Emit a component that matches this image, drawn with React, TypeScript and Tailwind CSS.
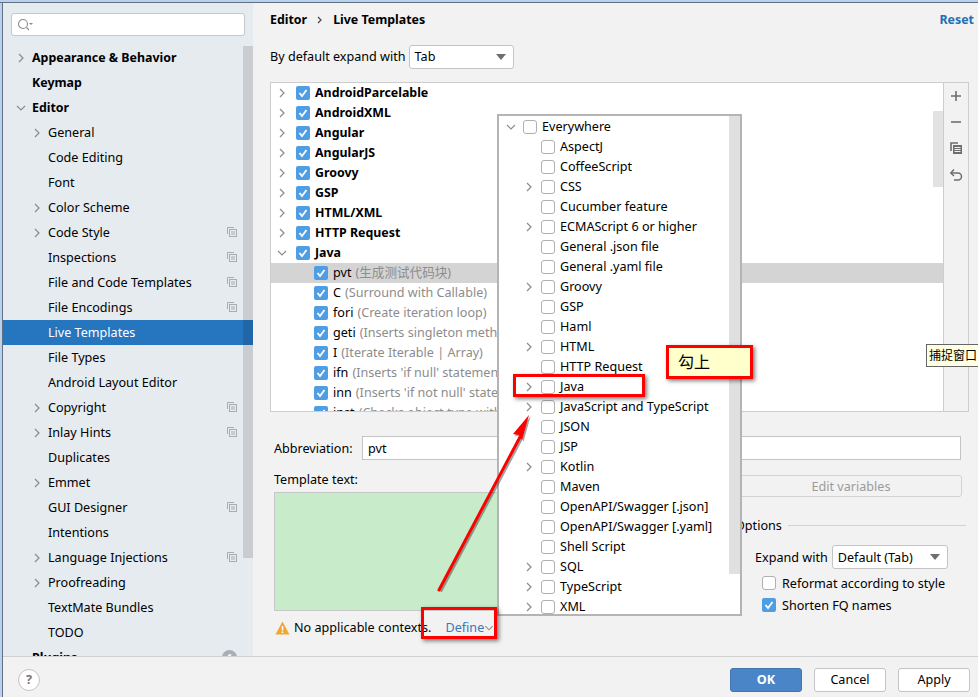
import React from "react";

const font = { fontFamily: '"Noto Sans","Noto Sans CJK SC",sans-serif' };

function Chevron({ open, className = "" }: { open?: boolean; className?: string }) {
  return (
    <svg width="10" height="10" viewBox="0 0 10 10" className={className} fill="none" stroke="#8c8c8c" strokeWidth="1.2">
      {open ? <path d="M1 3l4 4 4-4" /> : <path d="M3 1l4 4-4 4" />}
    </svg>
  );
}

function Check({ checked, className = "" }: { checked?: boolean; className?: string }) {
  return checked ? (
    <span className={`flex h-[14px] w-[14px] shrink-0 items-center justify-center rounded-[2px] bg-[#4f9ee3] ${className}`}>
      <svg width="10" height="10" viewBox="0 0 10 10" fill="none" stroke="#fff" strokeWidth="1.8">
        <path d="M1.5 5l2.5 3 4.5-6" />
      </svg>
    </span>
  ) : (
    <span className={`block h-[14px] w-[14px] shrink-0 rounded-[3px] border border-[#b0b0b0] bg-white ${className}`} />
  );
}

function CopyIcon() {
  return (
    <svg width="10" height="10" viewBox="0 0 10 10" fill="none" stroke="#a9adb2" strokeWidth="1">
      <path d="M.5 7V.5H7" />
      <rect x="2.5" y="2.5" width="7" height="7" />
      <path d="M4 5h4M4 7h4" />
    </svg>
  );
}

type Side = { t: string; lvl: 0 | 1; arrow?: "r" | "d"; copy?: boolean; sel?: boolean; badge?: boolean };
const side: Side[] = [
  { t: "Appearance & Behavior", lvl: 0, arrow: "r" },
  { t: "Keymap", lvl: 0 },
  { t: "Editor", lvl: 0, arrow: "d" },
  { t: "General", lvl: 1, arrow: "r" },
  { t: "Code Editing", lvl: 1 },
  { t: "Font", lvl: 1 },
  { t: "Color Scheme", lvl: 1, arrow: "r" },
  { t: "Code Style", lvl: 1, arrow: "r", copy: true },
  { t: "Inspections", lvl: 1, copy: true },
  { t: "File and Code Templates", lvl: 1, copy: true },
  { t: "File Encodings", lvl: 1, copy: true },
  { t: "Live Templates", lvl: 1, sel: true },
  { t: "File Types", lvl: 1 },
  { t: "Android Layout Editor", lvl: 1 },
  { t: "Copyright", lvl: 1, arrow: "r", copy: true },
  { t: "Inlay Hints", lvl: 1, arrow: "r", copy: true },
  { t: "Duplicates", lvl: 1 },
  { t: "Emmet", lvl: 1, arrow: "r" },
  { t: "GUI Designer", lvl: 1, copy: true },
  { t: "Intentions", lvl: 1 },
  { t: "Language Injections", lvl: 1, arrow: "r", copy: true },
  { t: "Proofreading", lvl: 1, arrow: "r" },
  { t: "TextMate Bundles", lvl: 1 },
  { t: "TODO", lvl: 1 },
  { t: "Plugins", lvl: 0, badge: true },
];

const groups = ["AndroidParcelable", "AndroidXML", "Angular", "AngularJS", "Groovy", "GSP", "HTML/XML", "HTTP Request"];
const tmpl: [string, string][] = [
  ["pvt", "(生成测试代码块)"],
  ["C", "(Surround with Callable)"],
  ["fori", "(Create iteration loop)"],
  ["geti", "(Inserts singleton method getInstance)"],
  ["I", "(Iterate Iterable | Array)"],
  ["ifn", "(Inserts 'if null' statement)"],
  ["inn", "(Inserts 'if not null' statement)"],
  ["inst", "(Checks object type with instanceof)"],
];

const ctx: [string, boolean][] = [
  ["AspectJ", false], ["CoffeeScript", false], ["CSS", true], ["Cucumber feature", false],
  ["ECMAScript 6 or higher", true], ["General .json file", false], ["General .yaml file", false],
  ["Groovy", true], ["GSP", false], ["Haml", false], ["HTML", true], ["HTTP Request", false],
  ["Java", true], ["JavaScript and TypeScript", true], ["JSON", false], ["JSP", false],
  ["Kotlin", true], ["Maven", false], ["OpenAPI/Swagger [.json]", false], ["OpenAPI/Swagger [.yaml]", false],
  ["Shell Script", false], ["SQL", true], ["TypeScript", true], ["XML", true],
];

function Caret() {
  return (
    <svg width="10" height="6" viewBox="0 0 10 6" fill="#6e6e6e">
      <path d="M0 0h10L5 6z" />
    </svg>
  );
}

export default function App() {
  return (
    <div style={font} className="relative flex h-[697px] w-[978px] flex-col overflow-hidden bg-[#f2f2f2] text-[12.6px] leading-[20px] text-black">
      <div className="h-[3px] shrink-0 border-b border-[#5f7183] bg-[#b9d1ea]" />
      <div className="flex min-h-0 flex-1">
        <div className="w-[3px] shrink-0 border-r border-[#5f7183] bg-[#b9d1ea]" />
        {/* sidebar */}
        <div className="relative w-[250px] shrink-0 overflow-hidden bg-[#e6ebf0]">
          <div className="px-[8px] pt-[10px]">
            <div className="flex h-[23px] w-[234px] items-center rounded-[3px] border border-[#c8c8c8] bg-white pl-[5px]">
              <svg width="16" height="14" viewBox="0 0 16 14" fill="none" stroke="#8a8a8a" strokeWidth="1.1">
                <circle cx="6" cy="6" r="4.5" />
                <path d="M9.5 9.5L12 12" />
                <path d="M12 5h4l-2 2z" fill="#8a8a8a" stroke="none" />
              </svg>
            </div>
          </div>
          <div className="mt-[9px]">
            {side.map((s) => (
              <div key={s.t} className={`relative flex h-[25px] items-center ${s.sel ? "bg-[#2675bf] text-white" : ""}`}>
                <span className={`flex w-[10px] shrink-0 ${s.lvl === 0 ? "ml-[13px] mr-[6px]" : "ml-[29px] mr-[6px]"}`}>
                  {s.arrow && <Chevron open={s.arrow === "d"} />}
                </span>
                <span className={s.lvl === 0 ? "text-[12.4px] font-bold" : ""}>{s.t}</span>
                {s.copy && (
                  <span className="absolute left-[224px] top-[7px]">
                    <CopyIcon />
                  </span>
                )}
                {s.badge && (
                  <span className="absolute left-[219px] top-[5px] flex h-[15px] w-[15px] items-center justify-center rounded-full bg-[#a8aeb5] text-[10px] font-bold text-white">1</span>
                )}
              </div>
            ))}
          </div>
          <div className="absolute left-[240px] top-[43px] h-[512px] w-[10px] bg-[#00000020]" />
        </div>
        {/* content */}
        <div className="min-w-0 flex-1 pl-[17px] pr-[9px]">
          <div className="-mr-[5px] flex h-[32px] items-center justify-between pt-[1px]">
            <div className="flex items-center text-[12.4px] font-bold">
              <span>Editor</span>
              <svg width="8" height="8" viewBox="0 0 8 8" className="mx-[9px]" fill="none" stroke="#444" strokeWidth="1.2">
                <path d="M2 1l3 3-3 3" />
              </svg>
              <span>Live Templates</span>
            </div>
            <span className="text-[12.4px] font-bold text-[#2470b3]">Reset</span>
          </div>
          <div className="mt-[10px] flex h-[24px] items-center">
            <span>By default expand with</span>
            <div className="ml-[3px] flex h-[24px] w-[105px] items-center justify-between rounded-[3px] border border-[#c4c4c4] bg-white pl-[5px] pr-[7px]">
              <span>Tab</span>
              <Caret />
            </div>
          </div>
          {/* template tree */}
          <div className="relative mt-[13px] flex h-[330px] border border-[#cdcdcd]">
            <div className="relative min-w-0 flex-1 overflow-hidden bg-white">
              {groups.map((g) => (
                <div key={g} className="flex h-[20px] items-center">
                  <Chevron className="ml-[6px] mr-[9px] shrink-0" />
                  <Check checked />
                  <span className="ml-[5px] text-[12.4px] font-bold">{g}</span>
                </div>
              ))}
              <div className="flex h-[20px] items-center">
                <Chevron open className="ml-[6px] mr-[9px] shrink-0" />
                <Check checked />
                <span className="ml-[5px] text-[12.4px] font-bold">Java</span>
              </div>
              {tmpl.map(([a, b], i) => (
                <div key={a} className={`flex h-[20px] items-center whitespace-nowrap pl-[43px] ${i === 0 ? "bg-[#d4d4d4]" : ""}`}>
                  <Check checked />
                  <span className="ml-[5px]">{a}</span>
                  <span className="ml-[4px] text-[#8c8c8c]">{b}</span>
                </div>
              ))}
              <div className="absolute right-0 top-[28px] h-[76px] w-[10px] bg-[#e2e2e2]" />
            </div>
            <div className="flex w-[25px] shrink-0 flex-col items-center gap-[10px] border-l border-[#cdcdcd] pt-[5px]">
              <svg width="16" height="16" viewBox="0 0 16 16" fill="none" stroke="#6e6e6e" strokeWidth="1.6">
                <path d="M8 3v10M3 8h10" />
              </svg>
              <svg width="16" height="16" viewBox="0 0 16 16" fill="none" stroke="#6e6e6e" strokeWidth="1.6">
                <path d="M3 8h10" />
              </svg>
              <svg width="16" height="16" viewBox="0 0 16 16" fill="none" stroke="#6e6e6e" strokeWidth="1.3">
                <path d="M3 11V3h7" strokeWidth="1.6" />
                <rect x="5" y="5" width="9" height="9" fill="#6e6e6e" stroke="none" />
                <path d="M6.5 7.5h6M6.5 9.5h6M6.5 11.5h6" stroke="#f2f2f2" strokeWidth="1" />
              </svg>
              <svg width="16" height="16" viewBox="0 0 16 16" fill="none" stroke="#6e6e6e" strokeWidth="1.5">
                <path d="M3 7h7a3 3 0 010 7H6" />
                <path d="M6 3.5L2.8 7 6 10" />
              </svg>
            </div>
          </div>
          {/* abbreviation */}
          <div className="mt-[24px] flex h-[24px] items-center pl-[4px] pr-[8px]">
            <span className="w-[88px] shrink-0 pt-[1px]">Abbreviation:</span>
            <div className="flex h-[24px] flex-1 items-center border border-[#c4c4c4] bg-white pl-[5px] pt-[1px]">pvt</div>
          </div>
          {/* lower */}
          <div className="mt-[15px] flex pl-[4px]">
            <div className="w-[466px] shrink-0">
              <div className="h-[17px] leading-[10px]">Template text:</div>
              <div className="h-[119px] border border-[#c8c8c8] bg-[#c8ebc9]" />
              <div className="mt-[7px] flex h-[20px] items-center">
                <svg width="15" height="14" viewBox="0 0 15 14" className="ml-[1px]">
                  <path d="M7.5 0.5L14.5 13.5H0.5z" fill="#f0a732" />
                  <path d="M7.5 5v4.5M7.5 10.5v1.5" stroke="#fff" strokeWidth="1.5" />
                </svg>
                <span className="mb-[1px] ml-[4px] whitespace-nowrap">No applicable contexts.</span>
                <span className="mb-[1px] ml-[14px] text-[#3d76b9]">Define</span>
                <Chevron open className="ml-0 shrink-0 scale-90" />
              </div>
            </div>
            <div className="min-w-0 flex-1">
              <div className="flex h-[22px] w-[222px] items-center justify-center rounded-[3px] border border-[#d2d2d2] pt-[1px] text-[#9b9b9b]">Edit variables</div>
              <div className="mt-[18px] -ml-[5px] flex h-[20px] items-center">
                <span className="whitespace-nowrap pt-[1px]">Options</span>
                <span className="ml-[6px] h-px w-[178px] bg-[#d2d2d2]" />
              </div>
              <div className="mt-[10px] flex h-[24px] items-center pl-[15px]">
                <span className="whitespace-nowrap pt-[1px]">Expand with</span>
                <div className="ml-[4px] flex h-[24px] w-[116px] shrink-0 items-center justify-between rounded-[3px] border border-[#c4c4c4] bg-white pl-[5px] pr-[7px]">
                  <span className="pt-[1px]">Default (Tab)</span>
                  <Caret />
                </div>
              </div>
              <div className="mt-[4px] flex h-[20px] items-center pl-[22px]">
                <Check />
                <span className="ml-[6px] whitespace-nowrap pt-[1px]">Reformat according to style</span>
              </div>
              <div className="mt-[2px] flex h-[20px] items-center pl-[22px]">
                <Check checked />
                <span className="ml-[6px] whitespace-nowrap pt-[1px]">Shorten FQ names</span>
              </div>
            </div>
          </div>
        </div>
      </div>
      {/* footer */}
      <div className="flex h-[41px] shrink-0">
        <div className="w-[3px] shrink-0 border-r border-[#5f7183] bg-[#b9d1ea]" />
        <div className="flex flex-1 items-center justify-between border-t border-[#d0d0d0] pl-[15px] pr-[8px] pt-[6px]">
          <div className="flex h-[22px] w-[22px] items-center justify-center rounded-full border border-[#c4c4c4] bg-white font-bold text-[#777]">?</div>
          <div className="flex gap-[12px]">
            <button className="h-[24px] w-[72px] rounded-[3px] border border-[#3f74ad] bg-[#4a86c7] font-bold text-white">OK</button>
            <button className="h-[24px] w-[72px] rounded-[3px] border border-[#c4c4c4] bg-white">Cancel</button>
            <button className="h-[24px] w-[72px] rounded-[3px] border border-[#c4c4c4] bg-white">Apply</button>
          </div>
        </div>
      </div>

      {/* context popup */}
      <div className="absolute left-[497px] top-[114px] h-[502px] w-[245px] overflow-hidden border-2 border-[#b4b4b4] bg-white">
        <div className="flex h-[20px] items-center pt-[2px]">
          <Chevron open className="ml-[7px] mr-[7px] shrink-0" />
          <Check />
          <span className="ml-[5px]">Everywhere</span>
        </div>
        {ctx.map(([t, arrow]) => (
          <div key={t} className="flex h-[20px] items-center pt-[2px]">
            <span className="ml-[25px] mr-[7px] w-[10px] shrink-0">{arrow && <Chevron />}</span>
            <Check />
            <span className="ml-[5px] whitespace-nowrap">{t}</span>
          </div>
        ))}
        <div className="absolute right-0 top-0 h-[458px] w-[11px] bg-[#e0e0e0]" />
      </div>

      {/* tooltip */}
      <div className="absolute left-[926px] top-[344px] flex h-[23px] w-[60px] items-center overflow-hidden whitespace-nowrap border border-[#666] bg-[#ffffe1] pl-[2px] text-[12px]">
        捕捉窗口，
      </div>

      {/* annotations */}
      <div className="absolute left-[513px] top-[374px] h-[23px] w-[132px] border-[3px] border-[#f00] shadow-[2px_2px_4px_rgba(0,0,0,0.5)]" />
      <div className="absolute left-[666px] top-[345px] flex h-[34px] w-[87px] items-center border-[3px] border-[#f00] bg-[#ffffcc] pl-[9px] text-[16px] shadow-[2px_2px_4px_rgba(0,0,0,0.5)]">
        勾上
      </div>
      <div className="absolute left-[421px] top-[607px] h-[32px] w-[76px] border-[3px] border-[#f00] shadow-[2px_2px_4px_rgba(0,0,0,0.5)]" />
      <svg className="pointer-events-none absolute left-0 top-0" width="978" height="697">
        <g transform="translate(1.5 1.5)" opacity="0.45">
          <path d="M439 590L520 437" stroke="#333" strokeWidth="3" fill="none" />
          <path d="M529 415L513 434l6 1 3 5z" fill="#333" />
        </g>
        <path d="M439 590L520 437" stroke="#f00" strokeWidth="3" fill="none" strokeLinecap="round" />
        <path d="M529 415L513 434l6 1 3 5z" fill="#f00" />
      </svg>
    </div>
  );
}
